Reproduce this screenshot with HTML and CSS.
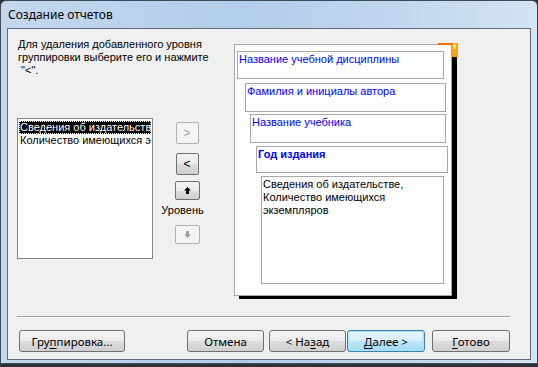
FILE: index.html
```html
<!DOCTYPE html>
<html lang="ru">
<head>
<meta charset="UTF-8">
<title>Создание отчетов</title>
<link rel="stylesheet" href="styles.css">
</head>
<body>
<div class="window">
    <div class="titlebar">Создание отчетов</div>
    <div class="client">
        <div class="content">
            <div class="left">
                <div class="hint">Для удаления добавленного уровня группировки выберите его и нажмите<br>&nbsp;"&lt;".</div>
                <div class="pick">
                    <div class="listbox">
                        <div class="item selected">Сведения об издательстве</div>
                        <div class="item">Количество имеющихся экземпляров</div>
                    </div>
                    <div class="arrows">
                        <button class="small-btn off">&gt;</button>
                        <button class="small-btn lt">&lt;</button>
                        <button class="small-btn wide up">
                            <svg width="7" height="7" viewBox="0 0 7 7"><polygon points="3.5,0 7,3.5 5,3.5 5,7 2,7 2,3.5 0,3.5" fill="#000"/></svg>
                        </button>
                        <div class="level">Уровень</div>
                        <button class="small-btn wide off down">
                            <svg width="7" height="7" viewBox="0 0 7 7"><polygon points="2,0 5,0 5,3.5 7,3.5 3.5,7 0,3.5 2,3.5" fill="#a0a0a0"/></svg>
                        </button>
                    </div>
                </div>
            </div>
            <div class="preview">
                <div class="page">
                    <svg class="corner" width="21" height="15" viewBox="0 0 21 15">
                        <rect x="0" y="0" width="15" height="2" fill="#f06a10"/>
                        <rect x="14" y="0" width="6" height="14" fill="#f7a21b"/>
                        <rect x="15" y="1" width="3" height="5" fill="#ffe45c"/>
                    </svg>
                    <div class="box b1">Название учебной дисциплины</div>
                    <div class="box b2">Фамилия и инициалы автора</div>
                    <div class="box b3">Название учебника</div>
                    <div class="box b4">Год издания</div>
                    <div class="box b5">Сведения об издательстве,<br>Количество имеющихся<br>экземпляров</div>
                </div>
            </div>
        </div>
        <div class="sep"></div>
        <div class="footer">
            <button class="btn grp">Гру<u>п</u>пировка...</button>
            <button class="btn cancel">Отмена</button>
            <button class="btn back">&lt; На<u>з</u>ад</button>
            <button class="btn next"><u>Д</u>алее &gt;</button>
            <button class="btn done"><u>Г</u>отово</button>
        </div>
    </div>
</div>
</body>
</html>
```

FILE: styles.css
```css
body {
    margin: 0;
    background-color: #2d3238;
    font-family: "Liberation Sans", Arial, sans-serif;
    font-size: 11px;
}
.window {
    box-sizing: border-box;
    width: 538px;
    height: 364px;
    padding: 0 6px 3px 6px;
    border: 1px solid #3f4a56;
    border-radius: 6px 6px 0 0;
    background: linear-gradient(to right, #c3d8ee 0%, #b2cdea 45%, #c2d7ee 75%, #d3e3f3 100%);
}
.titlebar {
    height: 27px;
    line-height: 27px;
    padding-left: 1px;
    font-family: "Noto Sans", sans-serif;
    font-size: 12px;
    color: #000;
}
.client {
    box-sizing: border-box;
    height: 332px;
    border: 1px solid #5d6d7e;
    background-color: #f0f0f0;
}
.content {
    display: flex;
    height: 287px;
}
.left {
    width: 226px;
    padding: 9px 0 0 9px;
    box-sizing: border-box;
}
.hint {
    height: 80px;
    padding-left: 1px;
    line-height: 13px;
    color: #000;
    width: 205px;
}
.pick {
    display: flex;
}
.listbox {
    box-sizing: border-box;
    width: 136px;
    height: 141px;
    padding: 2px 1px;
    border: 1px solid #828790;
    background-color: #fff;
    overflow: hidden;
}
.item {
    height: 13px;
    line-height: 13px;
    padding-left: 1px;
    white-space: nowrap;
    overflow: hidden;
    color: #000;
}
.item.selected {
    background-color: #000;
    color: #fff;
    outline: 1px dotted #fff;
    outline-offset: -1px;
}
.arrows {
    display: flex;
    flex-direction: column;
    align-items: center;
    width: 50px;
    margin-left: 9px;
    padding-top: 4px;
}
.small-btn {
    box-sizing: border-box;
    width: 23px;
    height: 22px;
    margin: 0 0 9px 0;
    padding: 0;
    border: 1px solid #707070;
    border-radius: 2px;
    background: linear-gradient(#f2f2f2, #ebebeb 50%, #dddddd 51%, #cfcfcf);
    font-family: "Liberation Sans", Arial, sans-serif;
    font-size: 12px;
    color: #000;
    display: flex;
    align-items: center;
    justify-content: center;
}
.small-btn.off {
    border-color: #adb2b5;
    background: #f4f4f4;
    color: #a0a0a0;
}
.small-btn.lt {
    margin-bottom: 6px;
}
.small-btn.wide {
    width: 25px;
    height: 19px;
    margin-bottom: 0;
}
.level {
    margin: 2px 9px 0 0;
    height: 23px;
    line-height: 16px;
    color: #000;
}
.preview {
    padding-top: 15px;
}
.page {
    position: relative;
    box-sizing: border-box;
    width: 218px;
    height: 252px;
    padding-top: 6px;
    border: 1px solid #a8a8a8;
    background-color: #fff;
    box-shadow: 5px 3px 0 #000;
}
.corner {
    position: absolute;
    top: -2px;
    right: -8px;
}
.box {
    box-sizing: border-box;
    border: 1px solid #a8a8a8;
    color: #0000ff;
    line-height: 13px;
    padding: 1px 0 0 1px;
}
.b1 {
    width: 207px;
    height: 28px;
    margin-left: 2px;
}
.b2 {
    width: 201px;
    height: 29px;
    margin: 4px 0 0 10px;
}
.b3 {
    width: 196px;
    height: 29px;
    margin: 2px 0 0 15px;
}
.b4 {
    width: 192px;
    height: 27px;
    margin: 3px 0 0 21px;
    font-weight: bold;
}
.b5 {
    width: 183px;
    height: 108px;
    margin: 3px 0 0 26px;
    padding-top: 1px;
    color: #000;
}
.sep {
    margin: 0 20px 0 9px;
    border-top: 1px solid #a0a0a0;
    border-bottom: 1px solid #fff;
}
.footer {
    display: flex;
    padding: 12px 0 0 11px;
}
.btn {
    box-sizing: border-box;
    width: 77px;
    height: 22px;
    padding: 0;
    border: 1px solid #707070;
    border-radius: 3px;
    background: linear-gradient(#f2f2f2, #ebebeb 50%, #dddddd 51%, #cfcfcf);
    font-family: "Noto Sans", sans-serif;
    font-size: 11.5px;
    color: #000;
}
.btn u {
    text-underline-offset: 2px;
}
.btn.grp {
    width: 106px;
}
.btn.cancel {
    margin-left: 62px;
}
.btn.back {
    margin-left: 5px;
}
.btn.next {
    width: 78px;
    margin-left: 1px;
    border-color: #3c7fb1;
    box-shadow: inset 0 0 0 1px #a6e3fb;
    background: linear-gradient(#eaf6fd, #d9f0fc 50%, #bee6fd 51%, #a7d9f5);
}
.btn.done {
    width: 78px;
    margin-left: 7px;
}
```
